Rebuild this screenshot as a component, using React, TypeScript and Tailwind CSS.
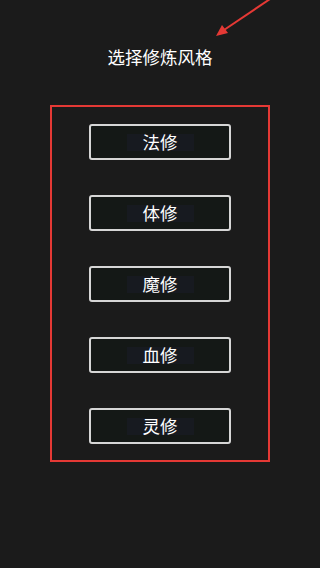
import React from 'react';

const STYLES = ['法修', '体修', '魔修', '血修', '灵修'];

function StyleButton({ label }: { label: string }) {
  return (
    <button className="flex h-[36px] w-[142px] items-center justify-center rounded-[3px] border-2 border-[#d6d6d6] bg-[#141816]">
      <span className="flex h-[17px] items-center bg-[#171a20] px-[16px] text-[17.5px] leading-none text-white">
        {label}
      </span>
    </button>
  );
}

export default function App() {
  return (
    <div
      className="relative h-[568px] w-[320px] overflow-hidden bg-[#1b1b1b]"
      style={{ fontFamily: '"Noto Sans CJK SC", "Noto Sans", sans-serif' }}
    >
      <svg className="absolute left-0 top-0" width="320" height="60" viewBox="0 0 320 60">
        <line x1="270" y1="-1" x2="224" y2="30" stroke="#e53935" strokeWidth="2" />
        <polygon points="216,36 222,25 228,33" fill="#e53935" />
      </svg>
      <div className="flex flex-col items-center">
        <h1 className="mt-[45px] text-[17.5px] leading-[24px] text-white">选择修炼风格</h1>
        <div className="mt-[36px] flex h-[357px] w-[220px] flex-col items-center gap-[35px] border-2 border-[#e53935] pt-[17px]">
          {STYLES.map((s) => (
            <StyleButton key={s} label={s} />
          ))}
        </div>
      </div>
    </div>
  );
}
